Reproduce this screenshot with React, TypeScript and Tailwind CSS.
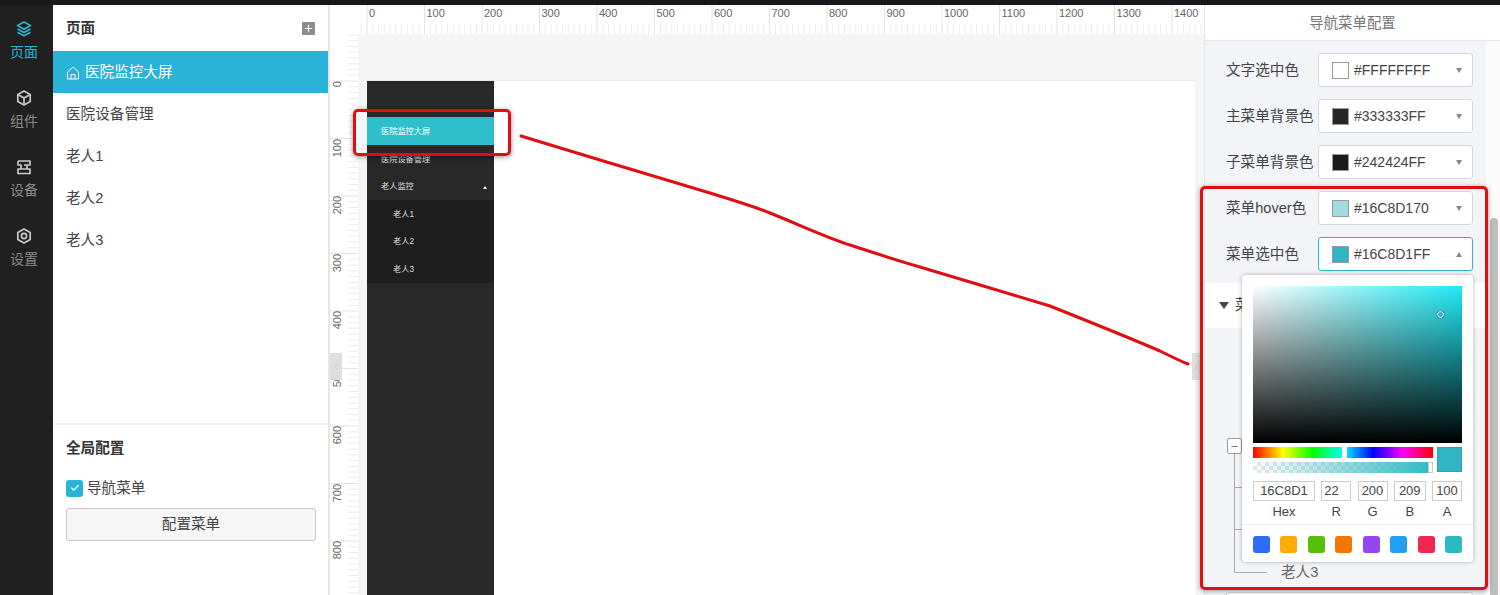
import { Check, ChevronLeft, Minus, Plus } from 'lucide-react';

const font = { fontFamily: '"Liberation Sans", "Noto Sans CJK SC", sans-serif' };

const railItems = [
  { label: '页面', active: true, icon: 'layers' },
  { label: '组件', active: false, icon: 'box' },
  { label: '设备', active: false, icon: 'device' },
  { label: '设置', active: false, icon: 'gear' },
];

function RailIcon({ name, active }: { name: string; active: boolean }) {
  const color = active ? '#2ab3d3' : '#c9c9c9';
  return (
    <svg width="16" height="16" viewBox="0 0 16 16" fill="none" stroke={color} strokeWidth="1.7" strokeLinejoin="round">
      {name === 'layers' && (
        <>
          <path d="M8 1 L14.5 4.6 L8 8.2 L1.5 4.6 Z" />
          <path d="M1.5 8 L8 11.4 L14.5 8" />
          <path d="M1.5 11.2 L8 14.8 L14.5 11.2" />
        </>
      )}
      {name === 'box' && (
        <>
          <path d="M8 1 L14.2 4.5 V11.5 L8 15 L1.8 11.5 V4.5 Z" />
          <path d="M1.8 4.5 L8 8 L14.2 4.5 M8 8 V15" />
        </>
      )}
      {name === 'device' && (
        <>
          <path d="M2 2 H14 V6 H8 M2 2 V6 H5 V10" />
          <path d="M11 6 V10 M2 10 H14 V14.5 H2 Z" />
        </>
      )}
      {name === 'gear' && (
        <>
          <path d="M8 1 L14.2 4.5 V11.5 L8 15 L1.8 11.5 V4.5 Z" />
          <circle cx="8" cy="8" r="2.6" />
        </>
      )}
    </svg>
  );
}

function Rail() {
  return (
    <div className="w-[53px] shrink-0 bg-[#202020] pt-[16px] pr-[5px]">
      {railItems.map((item) => (
        <div key={item.label} className="h-[69px] flex flex-col items-center">
          <RailIcon name={item.icon} active={item.active} />
          <span className={`mt-[5px] text-sm leading-[20px] ${item.active ? 'text-[#2ab3d3]' : 'text-[#8a8a8a]'}`}>
            {item.label}
          </span>
        </div>
      ))}
    </div>
  );
}

function PagePanel() {
  return (
    <div className="w-[277px] shrink-0 bg-white border-r-2 border-[#e6e6e6] flex flex-col text-[#444] text-[14.6px]">
      <div className="h-[46px] px-[13px] flex items-center justify-between">
        <span className="pt-[2px] font-bold text-[#333]">页面</span>
        <span className="w-[13px] h-[13px] bg-[#8c8c8c] rounded-[1px] flex items-center justify-center">
          <Plus size={11} strokeWidth={2.5} color="#fff" />
        </span>
      </div>
      <div className="h-[42px] bg-[#29b3d6] text-white pl-[13px] pt-[2px] flex items-center">
        <svg width="14" height="14" viewBox="0 0 14 14" fill="none" stroke="#fff" strokeWidth="1" className="mr-[5px]">
          <path d="M1.5 6 L7 1 L12.5 6 V13 H1.5 Z" />
          <path d="M5 13 V8.5 H9 V13" />
        </svg>
        医院监控大屏
      </div>
      {['医院设备管理', '老人1', '老人2', '老人3'].map((name) => (
        <div key={name} className="h-[42px] pl-[13px] pt-[2px] flex items-center">
          {name}
        </div>
      ))}
      <div className="mt-auto h-[172px] border-t-2 border-[#f1f1f1] pl-[13px] pr-[12px]">
        <div className="mt-[13px] font-bold text-[#333] leading-[20px]">全局配置</div>
        <div className="mt-[20px] flex items-center leading-[20px]">
          <span className="w-[17px] h-[17px] bg-[#29b3d6] rounded-[3px] flex items-center justify-center mr-[4px]">
            <Check size={10} strokeWidth={3} color="#fff" />
          </span>
          导航菜单
        </div>
        <div className="mt-[10px] h-[33px] pt-[1px] border border-[#c9c9c9] rounded-[3px] bg-[#f6f6f6] flex items-center justify-center">
          配置菜单
        </div>
      </div>
    </div>
  );
}

// rulers: 100 units = 57.5px, first major tick sits over the artboard edge
const hTicks = Array.from({ length: 150 }, (_, i) => i);
const vTicks = Array.from({ length: 100 }, (_, i) => i);
const hLabels = [0, 100, 200, 300, 400, 500, 600, 700, 800, 900, 1000, 1100, 1200, 1300, 1400];
const vLabels = [0, 100, 200, 300, 400, 500, 600, 700, 800];

function Canvas() {
  return (
    <div className="relative flex-1 bg-white overflow-hidden flex flex-col">
      <div className="relative h-[29px] shrink-0">
        <svg className="absolute left-0 top-0" width="874" height="29">
          {hTicks.map((i) => {
            const x = 37 + (i - 1) * 5.75;
            const major = (i - 1) % 10 === 0;
            return <line key={i} x1={x} x2={x} y1={major ? 0 : 19} y2={29} stroke={major ? '#e4e4e4' : '#ececec'} />;
          })}
        </svg>
        {hLabels.map((n, i) => (
          <span key={n} className="absolute top-[1px] text-[11px] leading-[14px] text-[#666]" style={{ left: 39 + i * 57.5 }}>
            {n}
          </span>
        ))}
      </div>
      <div className="flex flex-1 min-h-0">
        <div className="relative w-[28px] shrink-0">
          <svg className="absolute left-0 top-0" width="28" height="561">
            {vTicks.map((i) => {
              const y = 47 + (i - 9) * 5.75;
              const major = (i - 9) % 10 === 0;
              return <line key={i} y1={y} y2={y} x1={major ? 0 : 18} x2={28} stroke={major ? '#e4e4e4' : '#ececec'} />;
            })}
          </svg>
          {vLabels.map((n, i) => (
            <span
              key={n}
              className="absolute left-0 text-[11px] leading-[14px] text-[#666] [writing-mode:vertical-rl] rotate-180"
              style={{ top: 47 + i * 57.5 }}
            >
              {n}
            </span>
          ))}
          <div className="absolute left-0 top-[319px] w-[12px] h-[27px] bg-[#dedede] flex items-center justify-center">
            <ChevronLeft size={10} color="#c4c4c4" />
          </div>
        </div>
        <div className="flex-1 bg-[#f5f5f5] pt-[47px] px-[9px]">
          <div className="h-full bg-white shadow-[0_-1px_0_#e8e8e8] flex">
            <div className="w-[127px] h-full bg-[#282828] text-[8.2px] text-[#dedede]">
              <div className="h-[36px]" />
              <div className="h-[28px] bg-[#2ebfca] text-white pl-[14px] pt-[2px] flex items-center">医院监控大屏</div>
              <div className="h-[28px] pl-[14px] pt-[2px] flex items-center">医院设备管理</div>
              <div className="h-[27px] pl-[14px] pr-[7px] pt-[2px] flex items-center justify-between">
                老人监控
                <span className="w-0 h-0 border-x-[2px] border-x-transparent border-b-[3px] border-b-white" />
              </div>
              <div className="bg-[#1e1e1e]">
                {['老人1', '老人2', '老人3'].map((n) => (
                  <div key={n} className="h-[27.7px] pl-[26px] pt-[2px] flex items-center">
                    {n}
                  </div>
                ))}
              </div>
            </div>
          </div>
        </div>
      </div>
    </div>
  );
}

const colorRows = [
  { label: '文字选中色', swatch: '#ffffff', value: '#FFFFFFFF' },
  { label: '主菜单背景色', swatch: '#262626', value: '#333333FF' },
  { label: '子菜单背景色', swatch: '#1a1a1a', value: '#242424FF' },
  { label: '菜单hover色', swatch: '#9fdcdf', value: '#16C8D170' },
  { label: '菜单选中色', swatch: '#2fb5c3', value: '#16C8D1FF', open: true },
];

function ColorRow({ label, swatch, value, open }: { label: string; swatch: string; value: string; open?: boolean }) {
  return (
    <div className="h-[34px] mb-[12px] flex items-center">
      <span className="w-[92px] shrink-0 pt-[2px] text-[14.6px] text-[#444] whitespace-nowrap">{label}</span>
      <div
        className={`w-[155px] shrink-0 h-[34px] bg-white rounded-[3px] border flex items-center pl-[13px] pr-[10px] ${
          open ? 'border-[#2fb5c3]' : 'border-[#d4d6da]'
        }`}
      >
        <span className="w-[17px] h-[17px] border border-[#999] mr-[5px]" style={{ backgroundColor: swatch }} />
        <span className="text-sm text-[#444] flex-1">{value}</span>
        {open ? (
          <span className="w-0 h-0 border-x-[3.5px] border-x-transparent border-b-[5px] border-b-[#888]" />
        ) : (
          <span className="w-0 h-0 border-x-[3.5px] border-x-transparent border-t-[5px] border-t-[#888]" />
        )}
      </div>
    </div>
  );
}

const swatches = ['#2d6df6', '#fdac03', '#55bf09', '#f47500', '#9446f0', '#249ef2', '#f0264f', '#2bb9c2'];
const fields = [
  { label: 'Hex', value: '16C8D1', w: 'w-[62px]', align: 'text-center' },
  { label: 'R', value: '22', w: 'w-[30px]', align: 'text-left pl-[2px]' },
  { label: 'G', value: '200', w: 'w-[30px]', align: 'text-center' },
  { label: 'B', value: '209', w: 'w-[32px]', align: 'text-center' },
  { label: 'A', value: '100', w: 'w-[30px]', align: 'text-center' },
];

function Picker() {
  return (
    <div className="absolute left-[1242px] top-[275px] w-[231px] h-[287px] bg-white rounded-[4px] shadow-[0_0_4px_rgba(0,0,0,0.3)] text-[#444]">
      <div className="px-[11px] pt-[11px]">
        <div className="relative h-[157px] bg-[linear-gradient(to_bottom,transparent,#000),linear-gradient(to_right,#fff,#1fe9f5)]">
          <span className="absolute left-[184px] top-[25px] w-[7px] h-[7px] rounded-full border-[1.5px] border-white bg-[#2fb5c3] shadow-[0_0_1px_#000]" />
        </div>
        <div className="mt-[4px] flex justify-between">
          <div className="w-[180px]">
            <div className="relative h-[11px] bg-[linear-gradient(to_right,#f00,#ff0,#0f0,#0ff,#00f,#f0f,#f00)]">
              <span className="absolute left-[89px] top-0 w-[5px] h-[11px] bg-white" />
            </div>
            <div className="relative mt-[4px] h-[11px] bg-[linear-gradient(to_right,transparent,#2fb9c4),repeating-conic-gradient(#e6e6e6_0_25%,#fff_0_50%)] bg-[length:100%_100%,8px_8px]">
              <span className="absolute right-0 top-0 w-[5px] h-[11px] bg-white border border-[#ccc]" />
            </div>
          </div>
          <div className="w-[25px] h-[25px] bg-[#2fb5c3] border border-[#2aa5b2]" />
        </div>
        <div className="mt-[8px] flex justify-between">
          {fields.map((f) => (
            <div key={f.label} className={`${f.w} flex flex-col items-center`}>
              <div className={`w-full h-[20px] border border-[#ccc] text-[13px] leading-[18px] ${f.align}`}>{f.value}</div>
              <div className="mt-[3px] text-[13px] leading-[16px]">{f.label}</div>
            </div>
          ))}
        </div>
      </div>
      <div className="mt-[4px] border-t border-[#eee] px-[11px] pt-[11px] flex justify-between">
        {swatches.map((c) => (
          <span key={c} className="w-[17px] h-[17px] rounded-[3px]" style={{ backgroundColor: c }} />
        ))}
      </div>
    </div>
  );
}

function ConfigPanel() {
  return (
    <div className="w-[296px] shrink-0 bg-white border-l border-[#e6e6e6] flex flex-col">
      <div className="h-[36px] shrink-0 pt-[2px] border-b border-[#e4e6ea] flex items-center justify-center text-[14.4px] text-[#777]">
        导航菜单配置
      </div>
      <div className="flex flex-1 min-h-0">
        <div className="w-[281px] bg-[#f2f4f8] flex flex-col">
          <div className="pl-[21px] pr-[13px] pt-[12px] h-[242px] shrink-0">
            {colorRows.map((row) => (
              <ColorRow key={row.label} {...row} />
            ))}
          </div>
          <div className="h-[45px] shrink-0 bg-white px-[14px] flex items-center text-[14.6px] text-[#444]">
            <span className="w-0 h-0 border-x-[5px] border-x-transparent border-t-[7px] border-t-[#444] mr-[6px]" />
            菜单
          </div>
          <div className="relative flex-1">
            <span className="absolute left-[22px] top-[110px] w-[15px] h-[16px] bg-white border border-[#999] rounded-[2px] flex items-center justify-center">
              <Minus size={9} strokeWidth={2} color="#444" />
            </span>
            <span className="absolute left-[29px] top-[126px] w-px h-[118px] bg-[#aaa]" />
            <span className="absolute left-[29px] top-[159px] w-[20px] h-px bg-[#aaa]" />
            <span className="absolute left-[29px] top-[201px] w-[20px] h-px bg-[#aaa]" />
            <span className="absolute left-[29px] top-[244px] w-[33px] h-px bg-[#aaa]" />
            <span className="absolute left-[76px] top-[234px] text-[14.6px] leading-[20px] text-[#666]">老人3</span>
            <span className="absolute left-[21px] top-[264px] w-[247px] h-[10px] border border-[#d4d6da] rounded-t-[3px] bg-white" />
          </div>
        </div>
        <div className="flex-1 bg-[#fbfbfb] pt-[177px] pl-[4px]">
          <div className="w-[8px] h-full bg-[#bdbdbd] rounded-t-[4px]" />
        </div>
      </div>
    </div>
  );
}

function Annotations() {
  return (
    <>
      <div className="absolute left-[1192px] top-[353px] w-[8px] h-[27px] bg-[#dedede] flex items-center justify-center">
        <ChevronLeft size={8} color="#c4c4c4" className="rotate-180" />
      </div>
      <div className="absolute left-[353px] top-[109px] w-[158px] h-[47px] border-[3px] border-[#e00d12] rounded-[5px] shadow-[0_1px_5px_rgba(0,0,0,0.45)]" />
      <div className="absolute left-[1200px] top-[186px] w-[288px] h-[404px] border-[3px] border-[#e00d12] rounded-[5px] shadow-[0_1px_5px_rgba(0,0,0,0.4)]" />
      <svg className="absolute left-0 top-0 pointer-events-none" width="1500" height="595">
        <path
          d="M521 136 L600 160 L700 190 C730 199 750 205 770 213 C800 225 825 237 850 245 C875 253 895 260 920 267 L1050 306 C1090 322 1130 338 1160 351 C1170 356 1180 361 1188 364"
          fill="none"
          stroke="#e00d12"
          strokeWidth="3"
          strokeLinecap="round"
        />
      </svg>
    </>
  );
}

export default function App() {
  return (
    <div className="relative w-[1500px] h-[595px] overflow-hidden flex flex-col bg-white" style={font}>
      <div className="h-[5px] shrink-0 bg-[#17171c]" />
      <div className="flex flex-1 min-h-0">
        <Rail />
        <PagePanel />
        <Canvas />
        <ConfigPanel />
      </div>
      <Picker />
      <Annotations />
    </div>
  );
}
